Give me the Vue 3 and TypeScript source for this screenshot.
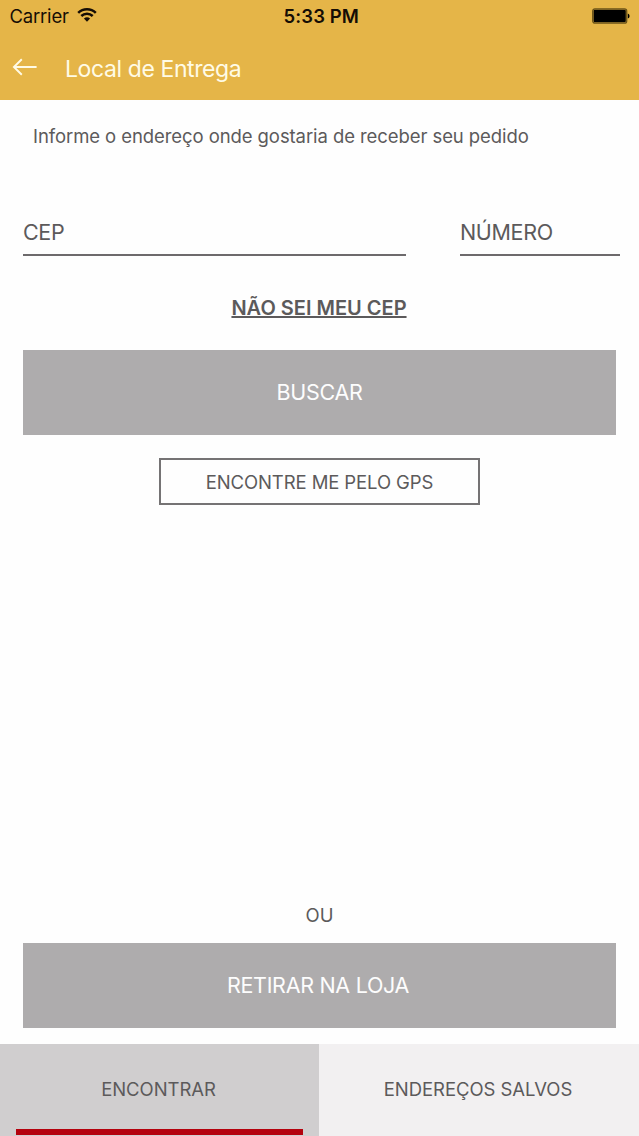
<script setup lang="ts">
import { ref } from 'vue'

type TabId = 'find' | 'saved'

interface Tab {
  id: TabId
  label: string
}

const tabs: Tab[] = [
  { id: 'find', label: 'ENCONTRAR' },
  { id: 'saved', label: 'ENDEREÇOS SALVOS' },
]
const active = ref<TabId>('find')
</script>

<template>
  <div class="screen">
    <header class="top">
      <div class="status">
        <div class="carrier">
          <span class="carrier-name">Carrier</span>
          <svg class="wifi" width="20" height="14" viewBox="0 0 20 14">
            <path d="M1.2 4.9A12.6 12.6 0 0 1 18.8 4.9" />
            <path d="M4.3 8A8.2 8.2 0 0 1 15.7 8" />
            <path class="dot" d="M10 13.8L6.9 10.6A4.6 4.6 0 0 1 13.1 10.6Z" />
          </svg>
        </div>
        <span class="time">5:33 PM</span>
        <svg class="battery" width="38" height="16" viewBox="0 0 38 16">
          <rect class="shell" x="0.7" y="0.8" width="34" height="14.4" rx="2.2" />
          <rect x="1.6" y="1.7" width="32.2" height="12.6" rx="1.4" />
          <path d="M35.8 5.4Q37.6 6 37.6 8T35.8 10.6Z" />
        </svg>
      </div>
      <div class="nav">
        <svg class="back" width="26" height="18" viewBox="0 0 26 18">
          <path d="M9.8 1.2L1.9 9L9.8 16.8M1.9 9H24.6" />
        </svg>
        <h1 class="title">Local de Entrega</h1>
      </div>
    </header>

    <main class="content">
      <p class="intro">Informe o endereço onde gostaria de receber seu pedido</p>
      <div class="fields">
        <div class="field cep"><span>CEP</span></div>
        <div class="field number"><span>NÚMERO</span></div>
      </div>
      <a class="unknown">NÃO SEI MEU CEP</a>
      <button class="primary search"><span>BUSCAR</span></button>
      <button class="gps"><span>ENCONTRE ME PELO GPS</span></button>
      <div class="spacer"></div>
      <div class="or">OU</div>
      <button class="primary pickup"><span>RETIRAR NA LOJA</span></button>
    </main>

    <nav class="tabs">
      <button
        v-for="tab in tabs"
        :key="tab.id"
        class="tab"
        :class="[tab.id, { active: active === tab.id }]"
        @click="active = tab.id"
      >
        <span>{{ tab.label }}</span>
      </button>
    </nav>
  </div>
</template>

<style>
body {
  margin: 0;
  background: #fefefe;
}
</style>

<style scoped>
.screen {
  width: 639px;
  height: 1136px;
  display: flex;
  flex-direction: column;
  overflow: hidden;
  background: #fefefe;
  color: #5c5a5b;
  font-family: Inter, "Liberation Sans", sans-serif;
}
button {
  display: flex;
  align-items: center;
  justify-content: center;
  box-sizing: border-box;
  margin: 0;
  padding: 0;
  border: 0;
  border-radius: 0;
  font-family: inherit;
  color: inherit;
}
.top {
  flex: none;
  height: 100px;
  background: #e5b548;
}
.status {
  display: grid;
  grid-template-columns: 1fr auto 1fr;
  align-items: center;
  height: 32px;
  padding: 0 9px 0 9.5px;
  color: #150d05;
}
.carrier {
  display: flex;
  align-items: center;
  gap: 8px;
}
.carrier-name {
  font-size: 18.5px;
  letter-spacing: -0.2px;
}
.wifi {
  margin-top: -2px;
}
.wifi path {
  fill: none;
  stroke: #150d05;
  stroke-width: 2.5;
}
.wifi .dot {
  fill: #150d05;
  stroke: none;
}
.time {
  position: relative;
  left: 1.5px;
  font-size: 18.5px;
  font-weight: 600;
  letter-spacing: 0.1px;
}
.battery {
  justify-self: end;
}
.battery .shell {
  fill: none;
  stroke: #6b5317;
  stroke-width: 1.3;
}
.nav {
  display: flex;
  align-items: center;
  height: 68px;
  padding-left: 12px;
  gap: 27px;
}
.back {
  margin-top: 2px;
}
.back path {
  fill: none;
  stroke: #fffbe6;
  stroke-width: 1.9;
}
.title {
  margin: 6px 0 0;
  font-size: 23px;
  line-height: 30px;
  font-weight: 400;
  letter-spacing: -0.4px;
  color: #fffbe6;
}
.content {
  flex: 1;
  display: flex;
  flex-direction: column;
  padding: 0 23px 16px;
}
.intro {
  margin: 24px 0 0 10px;
  font-size: 18.5px;
  line-height: 24px;
  letter-spacing: -0.08px;
}
.fields {
  display: flex;
  gap: 54px;
  margin: 66px -4px 0 0;
}
.field {
  box-sizing: border-box;
  height: 42px;
  border-bottom: 2px solid #6d6a6c;
  font-size: 21.5px;
  line-height: 37px;
  letter-spacing: -0.35px;
}
.cep {
  width: 383px;
}
.number {
  width: 160px;
}
.unknown {
  align-self: center;
  position: relative;
  left: -0.5px;
  margin-top: 38px;
  height: 28px;
  font-size: 20px;
  line-height: 28px;
  font-weight: 600;
  text-decoration: underline;
  text-decoration-thickness: 2px;
  text-underline-offset: 1px;
  text-decoration-skip-ink: none;
}
.primary {
  flex: none;
  width: 593px;
  height: 85px;
  padding-bottom: 2px;
  background: #aeacad;
  color: #fdfdfd;
  font-size: 21.5px;
  letter-spacing: -0.3px;
}
.search {
  margin-top: 28px;
}
.pickup {
  padding-right: 3px;
}
.gps {
  flex: none;
  align-self: center;
  width: 321px;
  height: 47px;
  margin-top: 23px;
  padding-top: 1px;
  border: 2px solid #757374;
  background: transparent;
  font-size: 18.5px;
  letter-spacing: -0.1px;
}
.spacer {
  flex: 1;
}
.or {
  height: 24px;
  margin-bottom: 16px;
  text-align: center;
  font-size: 18.5px;
  line-height: 24px;
}
.tabs {
  flex: none;
  display: grid;
  grid-template-columns: 319px 320px;
  height: 92px;
}
.tab {
  position: relative;
  padding: 0 2px 2px 0;
  background: #f2f0f1;
  font-size: 18.5px;
  letter-spacing: -0.05px;
}
.tab.active {
  background: #d0cecf;
}
.tab.active::after {
  content: "";
  position: absolute;
  left: 16px;
  right: 16px;
  bottom: 1px;
  height: 6px;
  background: #b4020e;
}
</style>
